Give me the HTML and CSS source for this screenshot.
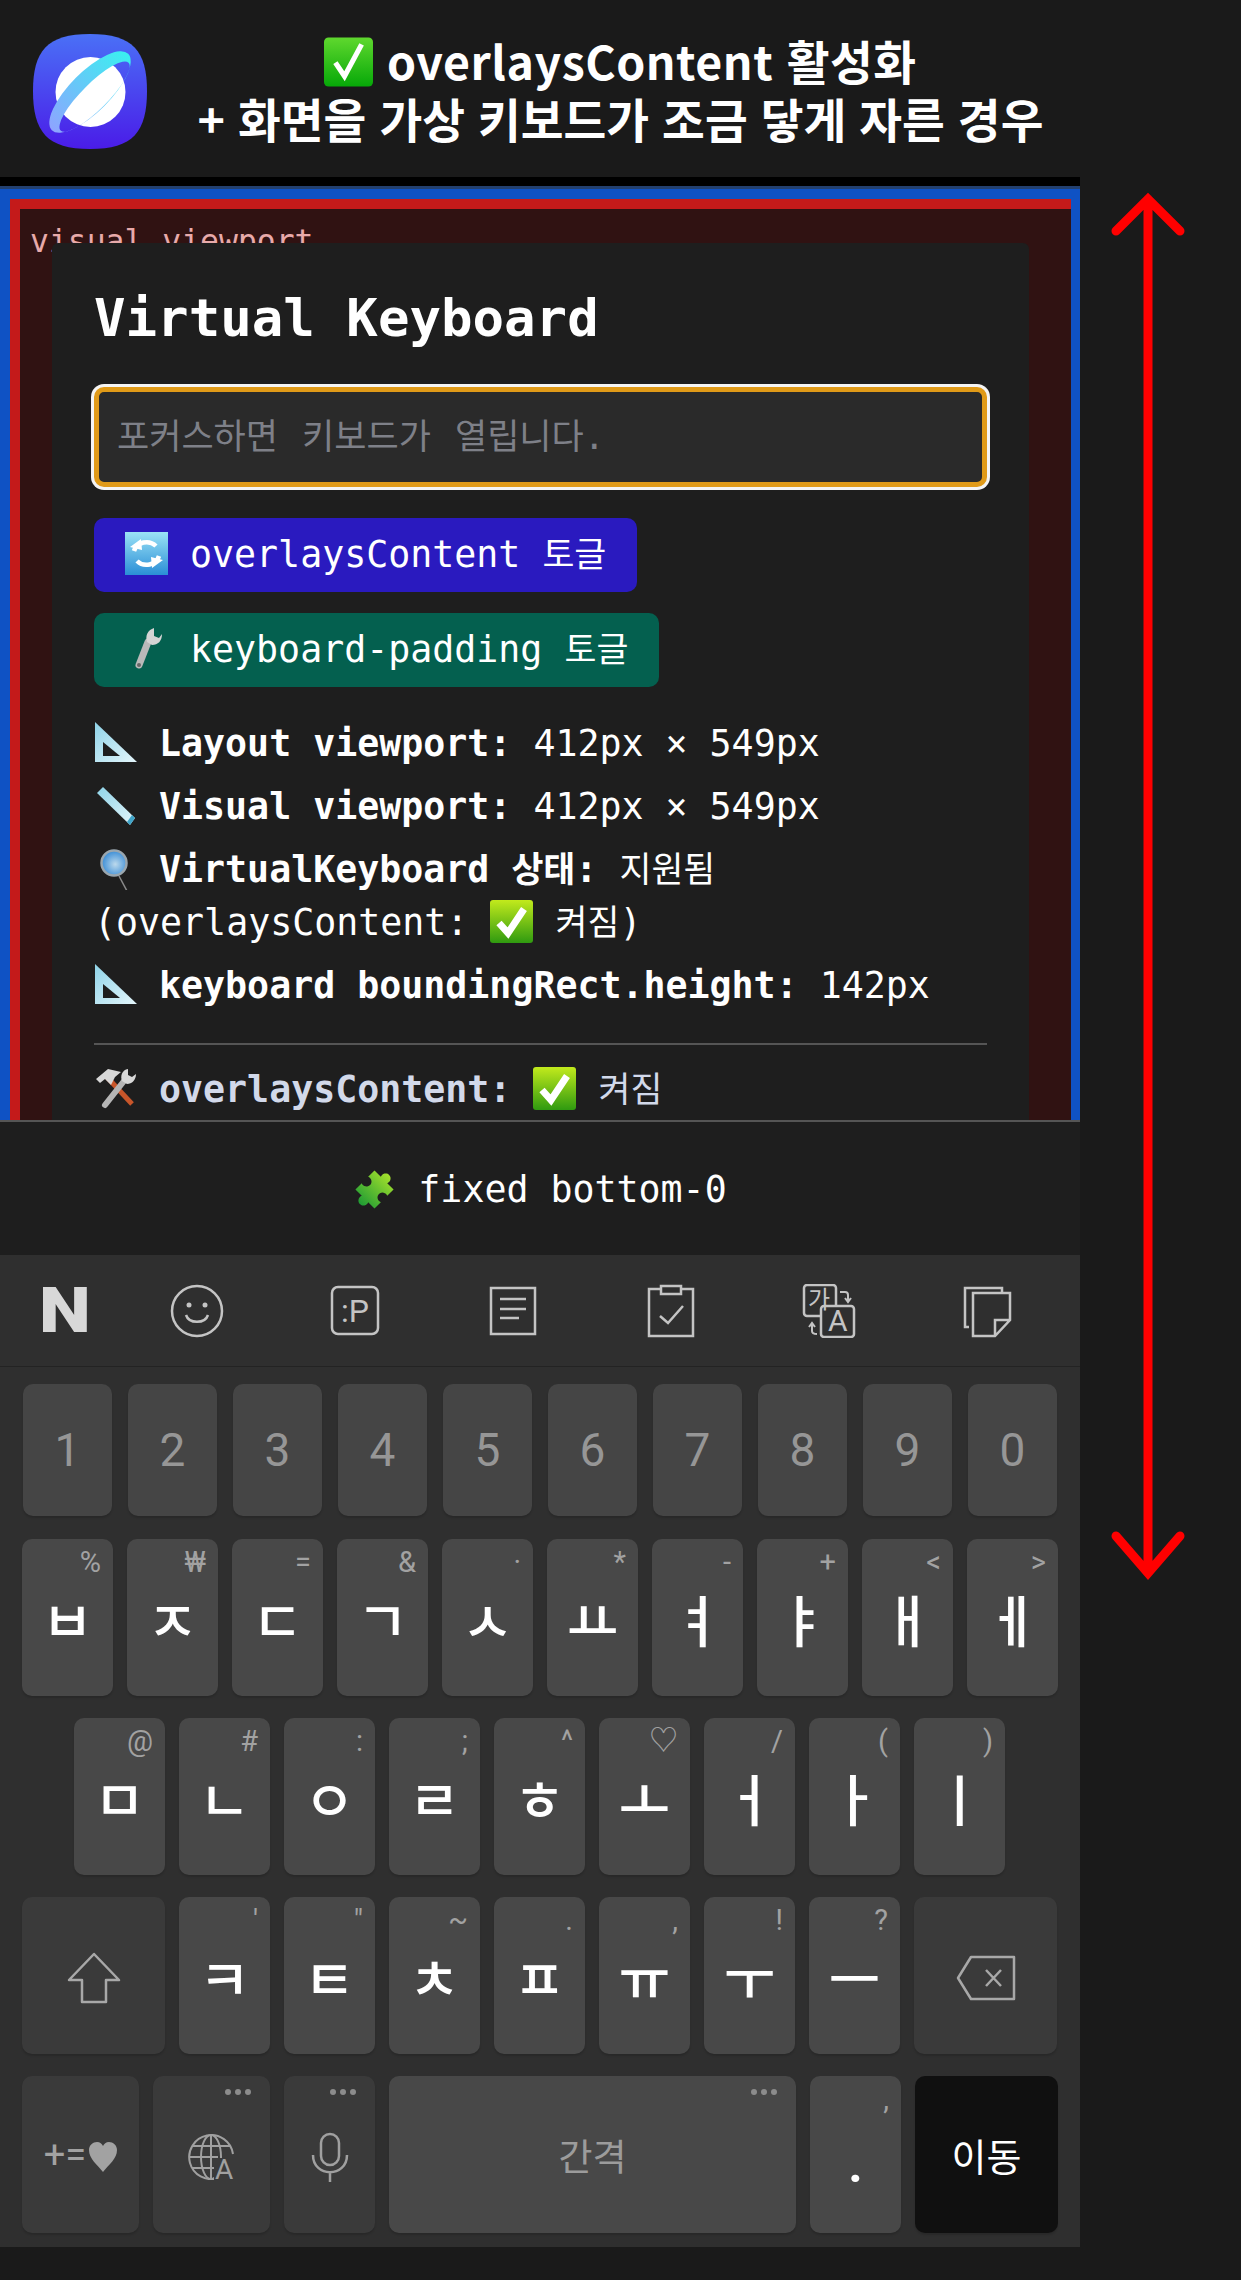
FILE: index.html
```html
<!DOCTYPE html>
<html lang="ko">
<head>
    <meta charset="UTF-8">
    <meta name="viewport" content="width=device-width, initial-scale=1.0">
    <title>Virtual Keyboard</title>
    <link rel="stylesheet" href="styles.css">
</head>
<body>
    <!-- shared emoji drawings -->
    <svg class="sprites" aria-hidden="true">
        <defs>
            <linearGradient id="g-check" x1="0" y1="0" x2="0" y2="1"><stop offset="0" stop-color="#c2ea1c"/><stop offset="1" stop-color="#2f9a10"/></linearGradient>
            <linearGradient id="g-check-big" x1="0" y1="0" x2="0" y2="1"><stop offset="0" stop-color="#5fd82e"/><stop offset="1" stop-color="#06a808"/></linearGradient>
            <linearGradient id="g-sync" x1="0" y1="0" x2="0" y2="1"><stop offset="0" stop-color="#9be2f6"/><stop offset="1" stop-color="#2a8ed6"/></linearGradient>
            <linearGradient id="g-tri" x1="0" y1="0" x2="1" y2="1"><stop offset="0" stop-color="#8fd3e8"/><stop offset="1" stop-color="#e4f6fb"/></linearGradient>
            <linearGradient id="g-puzzle" x1="0" y1="0" x2="0" y2="1"><stop offset="0" stop-color="#a4e02c"/><stop offset="1" stop-color="#1f9c34"/></linearGradient>
            <radialGradient id="g-lens" cx=".55" cy=".55" r=".6"><stop offset="0" stop-color="#bcd9ec"/><stop offset="1" stop-color="#2f86d4"/></radialGradient>
            <linearGradient id="g-logo" x1="0" y1="0" x2="0" y2="1"><stop offset="0" stop-color="#4a70f6"/><stop offset="1" stop-color="#4a1ce8"/></linearGradient>
            <linearGradient id="g-ring" x1="0" y1="0" x2="1" y2="0"><stop offset="0" stop-color="#8ea4ff"/><stop offset="1" stop-color="#3af0f0"/></linearGradient>
            <symbol id="e-check" viewBox="0 0 43 43">
                <rect x="0" y="0" width="43" height="43" rx="3" fill="url(#g-check)"/>
                <path d="M9 23l9 10L34 9" fill="none" stroke="#fff" stroke-width="7"/>
            </symbol>
            <symbol id="e-triangle" viewBox="0 0 43 43">
                <path d="M1 1L43 41H1Z" fill="url(#g-tri)"/>
                <path d="M9 21L26 35H9Z" fill="#1e1e1e"/>
            </symbol>
        </defs>
    </svg>

    <header class="top">
        <svg class="logo" viewBox="0 0 114 115">
            <path d="M57 0C100 0 114 17 114 57C114 98 100 115 57 115C14 115 0 98 0 57C0 17 14 0 57 0Z" fill="url(#g-logo)"/>
            <circle cx="57.500" cy="58" r="35" fill="#fff"/>
            <g transform="rotate(-45 57 58)">
                <path fill-rule="evenodd" fill="url(#g-ring)" d="M3 58a54 20 0 1 0 108 0a54 20 0 1 0-108 0ZM9 64.500a48 13 0 1 0 96 0a48 13 0 1 0-96 0Z"/>
            </g>
        </svg>
        <h2 class="top-title"><span class="top-line"><svg class="e-big" viewBox="0 0 43 43"><rect width="43" height="43" rx="4" fill="url(#g-check-big)"/><path d="M10 22l8 12L33 6" fill="none" stroke="#fff" stroke-width="4.500"/></svg> overlaysContent 활성화</span><br>+ 화면을 가상 키보드가 조금 닿게 자른 경우</h2>
    </header>

    <div class="phone">
        <div class="notch-bar"></div>
        <div class="viewport">
            <div class="layout-vp">
                <div class="visual-vp">
                    <span class="vp-label">visual viewport</span>
                    <main class="card">
                        <h1 class="card-title">Virtual Keyboard</h1>
                        <input class="field" type="text" placeholder="포커스하면 키보드가 열립니다.">
                        <button class="btn btn-blue"><svg class="emoji" viewBox="0 0 43 43"><rect width="43" height="43" fill="url(#g-sync)"/><path d="M9 19a13 12 0 0 1 22-5" fill="none" stroke="#fff" stroke-width="4.500"/><path d="M5 15l12 3-1-11Z" fill="#fff"/><path d="M34 24a13 12 0 0 1-22 5" fill="none" stroke="#fff" stroke-width="4.500"/><path d="M38 28l-12-3 1 11Z" fill="#fff"/></svg> overlaysContent <span class="ko">토글</span></button>
                        <button class="btn btn-green"><svg class="emoji" viewBox="0 0 43 43"><path d="M14 38L23 15" stroke="#b9b9b9" stroke-width="7" stroke-linecap="round"/><path d="M29 1c-6 2-9 7-7 14l5 3c6 0 10-4 10-11l-3 4-5-2 0-5Z" fill="#d4d4d4"/><circle cx="14" cy="38" r="2" fill="#666"/></svg> keyboard-padding <span class="ko">토글</span></button>
                        <p class="stat"><svg class="emoji"><use href="#e-triangle"/></svg> <b>Layout viewport:</b> 412px × 549px</p>
                        <p class="stat"><svg class="emoji" viewBox="0 0 43 43"><path d="M3 9L9 3L41 34L36 41Z" fill="url(#g-tri)"/><path d="M36 41L41 34L38 31L33 38Z" fill="#3fa4c8"/></svg> <b>Visual viewport:</b> 412px × 549px</p>
                        <p class="stat"><svg class="emoji" viewBox="0 0 43 43"><path d="M25 29L33 44" stroke="#8a8a8a" stroke-width="1.500"/><circle cx="20" cy="16" r="12.500" fill="url(#g-lens)" stroke="#9aa6ae" stroke-width="2.500"/></svg> <b>VirtualKeyboard <span class="ko">상태</span>:</b> <span class="ko">지원됨</span> (overlaysContent: <svg class="emoji"><use href="#e-check"/></svg> <span class="ko">켜짐</span>)</p>
                        <p class="stat"><svg class="emoji"><use href="#e-triangle"/></svg> <b>keyboard boundingRect.height:</b> 142px</p>
                        <hr class="rule">
                        <p class="stat stat-dim"><svg class="emoji" viewBox="0 0 43 43"><path d="M12 9L38 37" stroke="#c8562a" stroke-width="5"/><path d="M2 12L14 2L27 5L21 10L17 18L11 12L6 16Z" fill="#d8d8d8"/><path d="M11 38L30 14" stroke="#b5b5b5" stroke-width="6" stroke-linecap="round"/><path d="M34 2c-6 1-8 7-6 12l5 3c5 0 9-4 9-10l-4 3-4-2Z" fill="#d8d8d8"/></svg> <b>overlaysContent:</b> <svg class="emoji"><use href="#e-check"/></svg> <span class="ko">켜짐</span></p>
                    </main>
                </div>
            </div>
        </div>

        <div class="fixed-bar"><svg class="emoji" viewBox="0 0 43 43"><g transform="rotate(45 21.500 21.500)"><path d="M8 8H17A5 5 0 1 1 26 8H35V17A5 5 0 1 0 35 26V35H26A5 5 0 1 1 17 35H8V26A5 5 0 1 0 8 17Z" fill="url(#g-puzzle)"/></g></svg> fixed bottom-0</div>

        <section class="keyboard">
            <div class="toolbar">
                <span class="tool tool-n">N</span>
                <svg class="tool" viewBox="0 0 54 54" fill="none" stroke="#c4c4c4" stroke-width="2.500"><circle cx="27" cy="27" r="25"/><circle cx="19" cy="21" r="2.500" fill="#c4c4c4" stroke="none"/><circle cx="35" cy="21" r="2.500" fill="#c4c4c4" stroke="none"/><path d="M16 31c3 9 19 9 22 0"/></svg>
                <svg class="tool" viewBox="0 0 54 54" fill="none" stroke="#c4c4c4" stroke-width="2.500"><rect x="4" y="3" width="46" height="47" rx="6"/><text x="13" y="38" class="tool-text">:P</text></svg>
                <svg class="tool" viewBox="0 0 54 54" fill="none" stroke="#c4c4c4" stroke-width="2.500"><rect x="5" y="4" width="44" height="46"/><path d="M14 15H40M14 25H40M14 34H33"/></svg>
                <svg class="tool" viewBox="0 0 54 54" fill="none" stroke="#c4c4c4" stroke-width="2.500"><rect x="5" y="5" width="44" height="47"/><rect x="17" y="2" width="20" height="8" fill="#2f2f2f"/><path d="M16 32l8 7L39 22"/></svg>
                <svg class="tool" viewBox="0 0 54 54" fill="none" stroke="#c4c4c4" stroke-width="2.500"><rect x="2" y="1" width="32" height="31" rx="3"/><rect x="19" y="22" width="33" height="31" rx="3" fill="#2f2f2f"/><text x="6" y="24" class="tool-text tool-text-sm">가</text><text x="26" y="47" class="tool-text tool-text-md">A</text><path d="M38 8h5c2 0 3 1 3 3v6M43 14l3 4 3-4M15 50c-3 0-5-1-5-3v-7M7 43l3-4 3 4" stroke-width="2"/></svg>
                <svg class="tool" viewBox="0 0 54 54" fill="none" stroke="#c4c4c4" stroke-width="2.500"><path d="M9 43H5V4H42V9"/><path d="M13 9H50V36L35 52H13ZM35 52V36H50"/></svg>
            </div>

            <div class="row row-num">
                <div class="key key-num">1</div><div class="key key-num">2</div><div class="key key-num">3</div><div class="key key-num">4</div><div class="key key-num">5</div><div class="key key-num">6</div><div class="key key-num">7</div><div class="key key-num">8</div><div class="key key-num">9</div><div class="key key-num">0</div>
            </div>
            <div class="row">
                <div class="key"><span class="hint">%</span>ㅂ</div>
                <div class="key"><span class="hint">₩</span>ㅈ</div>
                <div class="key"><span class="hint">=</span>ㄷ</div>
                <div class="key"><span class="hint">&amp;</span>ㄱ</div>
                <div class="key"><span class="hint">·</span>ㅅ</div>
                <div class="key"><span class="hint">*</span>ㅛ</div>
                <div class="key"><span class="hint">-</span>ㅕ</div>
                <div class="key"><span class="hint">+</span>ㅑ</div>
                <div class="key"><span class="hint">&lt;</span>ㅐ</div>
                <div class="key"><span class="hint">&gt;</span>ㅔ</div>
            </div>
            <div class="row row-home">
                <div class="key"><span class="hint">@</span>ㅁ</div>
                <div class="key"><span class="hint">#</span>ㄴ</div>
                <div class="key"><span class="hint">:</span>ㅇ</div>
                <div class="key"><span class="hint">;</span>ㄹ</div>
                <div class="key"><span class="hint">^</span>ㅎ</div>
                <div class="key"><span class="hint">♡</span>ㅗ</div>
                <div class="key"><span class="hint">/</span>ㅓ</div>
                <div class="key"><span class="hint">(</span>ㅏ</div>
                <div class="key"><span class="hint">)</span>ㅣ</div>
            </div>
            <div class="row">
                <div class="key key-fn key-wide"><svg class="key-icon" width="54" height="52" viewBox="0 0 54 52" fill="none" stroke="#a8a8a8" stroke-width="2.500" stroke-linejoin="round"><path d="M27 2L52 28H39V50H15V28H2Z"/></svg></div>
                <div class="key"><span class="hint">'</span>ㅋ</div>
                <div class="key"><span class="hint">"</span>ㅌ</div>
                <div class="key"><span class="hint">~</span>ㅊ</div>
                <div class="key"><span class="hint">.</span>ㅍ</div>
                <div class="key"><span class="hint">,</span>ㅠ</div>
                <div class="key"><span class="hint">!</span>ㅜ</div>
                <div class="key"><span class="hint">?</span>ㅡ</div>
                <div class="key key-fn key-wide"><svg class="key-icon" width="60" height="46" viewBox="0 0 60 46" fill="none" stroke="#a8a8a8" stroke-width="2.500" stroke-linejoin="round"><path d="M15 2H58V44H15L2 23Z"/><path d="M30 15L45 31M45 15L30 31"/></svg></div>
            </div>
            <div class="row">
                <div class="key key-fn key-mid key-sym">+=<svg class="heart" width="28" height="30" viewBox="0 0 28 30"><path d="M14 30C8 22 0 17 0 8C0 3 4 0 8 0C11 0 13 2 14 4C15 2 17 0 20 0C24 0 28 3 28 8C28 17 20 22 14 30Z" fill="#a2a2a2"/></svg></div>
                <div class="key key-fn key-mid"><span class="dots"><i></i><i></i><i></i></span><svg class="key-icon" width="47" height="46" viewBox="0 0 47 46" fill="none" stroke="#a0a0a0" stroke-width="2"><path d="M30 44a22 22 0 1 1 15-24"/><ellipse cx="23" cy="23" rx="10" ry="22"/><path d="M23 1V44M4 12H42M1 23H30M4 34H26"/><rect x="26" y="24" width="21" height="22" fill="#3a3a3a" stroke="none"/><text x="27" y="45" class="globe-a">A</text></svg></div>
                <div class="key key-fn"><span class="dots"><i></i><i></i><i></i></span><svg class="key-icon" width="38" height="50" viewBox="0 0 38 50" fill="none" stroke="#a0a0a0" stroke-width="2.500"><rect x="10" y="2" width="18" height="31" rx="9"/><path d="M2 23c0 23 34 23 34 0M19 40V50"/></svg></div>
                <div class="key key-space"><span class="dots"><i></i><i></i><i></i></span>간격</div>
                <div class="key key-period"><span class="hint">,</span>.</div>
                <div class="key key-enter">이동</div>
            </div>
        </section>
    </div>

    <!-- annotation drawn over the screenshot -->
    <svg class="span-arrow" width="90" height="1400" viewBox="0 0 90 1400" fill="none" stroke="#ff0000" stroke-width="9" stroke-linecap="round">
        <path d="M43 15V1388M11 47L43 15L75 47M11 1352L43 1389L75 1352"/>
    </svg>
</body>
</html>
```

FILE: styles.css
```css
body {
    margin: 0;
    width: 1241px;
    height: 2280px;
    position: relative;
    overflow: hidden;
    background-color: #1a1a1a;
    color: #fff;
    font-family: "DejaVu Sans Mono", "Noto Sans CJK KR", monospace;
    font-size: 36.6px;
}
.sprites {
    position: absolute;
    width: 0;
    height: 0;
}

/* top caption */
.top {
    height: 177px;
    display: grid;
    grid-template-columns: 150px 1fr 150px;
    align-items: center;
}
.logo {
    width: 114px;
    height: 115px;
    margin-left: 33px;
    margin-top: 6px;
}
.top-title {
    margin: 0;
    text-align: center;
    font-family: "Noto Sans CJK KR", sans-serif;
    font-size: 46.5px;
    font-weight: 700;
    line-height: 58px;
    white-space: nowrap;
}
.top-line {
    letter-spacing: .5px;
}
.e-big {
    width: 49px;
    height: 50px;
    vertical-align: -7px;
}

/* phone screen */
.phone {
    width: 1080px;
}
.notch-bar {
    height: 9px;
    background-color: #000;
    border-bottom: 3px solid #23406f;
}
.viewport {
    height: 931px;
    overflow: hidden;
}
.layout-vp {
    border: solid #0f52c4;
    border-width: 10px 9px 0 10px;
}
.visual-vp {
    position: relative;
    border: solid #c41a1a;
    border-width: 10px 0 0 10px;
    background-color: #301212;
    padding: 34px 42px 0 32px;
}
.vp-label {
    position: absolute;
    left: 10px;
    top: 10px;
    font-size: 31.4px;
    line-height: 44px;
    color: #e8aaaa;
}
.card {
    position: relative;
    background-color: #1e1e1e;
    border-radius: 6px;
    padding: 43px 42px 40px;
}
.card-title {
    margin: 0 0 38px;
    font-size: 52.4px;
    line-height: 63px;
    font-weight: 700;
}
.field {
    display: block;
    box-sizing: border-box;
    width: 100%;
    height: 100px;
    margin: 0 0 31px;
    padding: 0 18px;
    border: 5px solid #e09a18;
    border-radius: 10px;
    box-shadow: 0 0 0 3px #f4f4f4;
    outline: none;
    background-color: #2a2a2a;
    font-family: inherit;
    font-size: 35px;
    word-spacing: 3px;
    color: #fff;
}
.field::placeholder {
    color: #7e8088;
    opacity: 1;
}
.btn {
    display: block;
    height: 74px;
    margin: 0 0 21px;
    padding: 0 31px 3px;
    border: none;
    border-radius: 10px;
    color: #fff;
    font-family: inherit;
    font-size: 36.6px;
    white-space: pre-wrap;
}
.btn-blue {
    background-color: #2a1abf;
}
.btn-green {
    background-color: #04604f;
    margin-bottom: 31px;
}
.ko {
    font-size: .95em;
    line-height: 1;
}
.emoji {
    width: 43px;
    height: 43px;
    vertical-align: -8px;
}
.stat {
    margin: 0 0 10.5px;
    line-height: 52.5px;
}
.stat-dim {
    color: #d2d9ea;
}
.rule {
    margin: 31px 0 19px;
    border: none;
    border-top: 2px solid #555;
}

/* fixed bar */
.fixed-bar {
    height: 131px;
    padding-top: 2px;
    display: flex;
    align-items: center;
    justify-content: center;
    gap: 22px;
    border-top: 2px solid #555;
    background-color: #1e1e1e;
}

/* keyboard */
.keyboard {
    height: 992px;
    box-sizing: border-box;
    background-color: #2f2f2f;
    font-family: Roboto, "Noto Sans CJK KR", sans-serif;
}
.toolbar {
    height: 111px;
    display: flex;
    align-items: center;
    gap: 104px;
    padding-left: 38px;
    border-bottom: 1px solid #232323;
    margin-bottom: 17px;
}
.tool {
    flex: none;
    width: 54px;
    height: 54px;
}
.tool-n {
    margin-right: -26px;
    font-family: Roboto, sans-serif;
    font-size: 63px;
    font-weight: 900;
    line-height: 54px;
    text-align: center;
    color: #d8d8d8;
    transform: scaleX(1.17);
}
.tool-text {
    font-family: Roboto, sans-serif;
    font-size: 32px;
    fill: #c4c4c4;
    stroke: none;
}
.tool-text-sm {
    font-family: "Noto Sans CJK KR", sans-serif;
    font-size: 24px;
}
.tool-text-md {
    font-size: 30px;
}
.row {
    display: flex;
    gap: 14px;
    padding-left: 22px;
    margin-bottom: 22px;
}
.row-home {
    padding-left: 74px;
}
.row-num {
    gap: 16px;
    padding-left: 23px;
    margin-bottom: 23px;
}
.key {
    position: relative;
    flex: none;
    width: 91px;
    height: 157px;
    display: flex;
    align-items: center;
    justify-content: center;
    border-radius: 10px;
    background-color: #484848;
    box-shadow: 0 2px 2px rgba(0, 0, 0, .15);
    font-family: "Noto Sans CJK KR", sans-serif;
    font-size: 56px;
    font-weight: 500;
}
.key-num {
    width: 89px;
    height: 132px;
    background-color: #454545;
    font-family: Roboto, sans-serif;
    font-size: 46px;
    font-weight: 400;
    color: #969696;
}
.hint {
    position: absolute;
    top: 8px;
    right: 12px;
    font-family: Roboto, "Noto Sans CJK KR", sans-serif;
    font-size: 29px;
    font-weight: 400;
    line-height: 30px;
    color: #a2a2a2;
}
.key-fn {
    background-color: #3a3a3a;
}
.key-wide {
    width: 143px;
}
.key-mid {
    width: 117px;
}
.key-sym {
    font-family: Roboto, sans-serif;
    font-size: 38px;
    font-weight: 400;
    color: #a2a2a2;
    gap: 3px;
}
.heart {
    margin-top: 4px;
}
.key-icon {
    margin-top: 4px;
}
.globe-a {
    font-family: Roboto, sans-serif;
    font-size: 28px;
    font-weight: 400;
    fill: #a0a0a0;
    stroke: none;
}
.key-space {
    width: 407px;
    font-size: 37px;
    font-weight: 400;
    color: #9c9c9c;
}
.key-period {
    font-family: Roboto, sans-serif;
    font-size: 50px;
    font-weight: 700;
    padding-top: 20px;
    box-sizing: border-box;
}
.key-enter {
    width: 143px;
    background-color: #101010;
    font-size: 38px;
    font-weight: 400;
}
.dots {
    position: absolute;
    top: 13px;
    right: 19px;
    display: flex;
    gap: 4px;
}
.dots i {
    width: 6px;
    height: 6px;
    border-radius: 50%;
    background-color: #8c8c8c;
}

/* red double arrow on the right of the screen */
.span-arrow {
    position: absolute;
    left: 1105px;
    top: 184px;
}
```
